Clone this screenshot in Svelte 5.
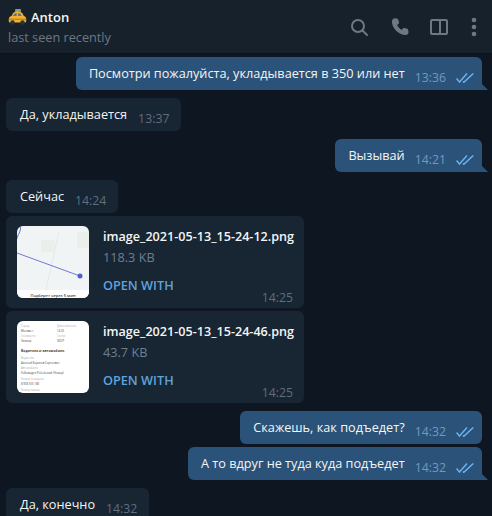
<script>
    const rows = [
        { id: 1, out: true, text: "Посмотри пожалуйста, укладывается в 350 или нет", time: "13:36", tail: true, gap: 0 },
        { id: 2, out: false, text: "Да, укладывается", time: "13:37", gap: 8 },
        { id: 3, out: true, text: "Вызывай", time: "14:21", tail: true, gap: 8 },
        { id: 4, out: false, text: "Сейчас", time: "14:24", gap: 8 },
        { id: 5, file: "image_2021-05-13_15-24-12.png", size: "118.3 KB", kind: "map", time: "14:25", gap: 3 },
        { id: 6, file: "image_2021-05-13_15-24-46.png", size: "43.7 KB", kind: "doc", time: "14:25", gap: 3 },
        { id: 7, out: true, text: "Скажешь, как подъедет?", time: "14:32", gap: 8 },
        { id: 8, out: true, text: "А то вдруг не туда куда подъедет", time: "14:32", tail: true, gap: 3 },
        { id: 9, out: false, text: "Да, конечно", time: "14:32", gap: 8 },
    ];
</script>

{#snippet ticks()}
    <svg class="ticks" width="18" height="10" viewBox="0 0 18 10" fill="none" stroke="#6ab2f2" stroke-width="1.500">
        <path d="M0.500 5.500l3 3.500 7.500-8.500" />
        <path d="M7 8.500l.8.800 9.500-8.800" />
    </svg>
{/snippet}

<div class="window">
    <header class="topbar">
        <div class="peer">
            <div class="name">
                <svg class="taxi" width="19" height="16" viewBox="0 0 19 16">
                    <rect x="7" y="0" width="6" height="3" rx="1" fill="#8d9a78" />
                    <path d="M4 6.500C5 3.500 6 2.500 9.500 2.500s5 1 6 4l2 1.500c1 .8 1 5.500 0 5.500H1.500c-1 0-1-4.700 0-5.500z" fill="#f0b030" />
                    <path d="M5 7c.6-2 1.500-3 3.700-3v3zM10 4c2 0 3 1 3.700 3H10z" fill="#607686" />
                    <rect x="1" y="9.500" width="17" height="1.500" fill="#c98a1c" />
                    <circle cx="4.500" cy="13.500" r="2.200" fill="#2d3138" />
                    <circle cx="14.500" cy="13.500" r="2.200" fill="#2d3138" />
                </svg>
                <span>Anton</span>
            </div>
            <div class="status">last seen recently</div>
        </div>
        <div class="actions">
            <svg width="20" height="20" viewBox="0 0 20 20" fill="none" stroke="#6d7883" stroke-width="2">
                <circle cx="9" cy="9" r="6" />
                <path d="M13.500 13.500L18 18" stroke-linecap="round" />
            </svg>
            <svg class="phone" width="20" height="20" viewBox="0 0 24 24" fill="#6d7883">
                <path d="M6.600 1.500l3 .8 1.500 5-2.500 2.200c1 2.400 3 4.500 5.600 5.800l2.300-2.400 5 1.500.7 3.300c.2 1.500-.6 3.600-2.800 3.900C10.500 22 1.700 12.500 2.300 5c.2-2.200 2.500-3.800 4.300-3.500z" />
            </svg>
            <svg width="20" height="20" viewBox="0 0 20 20" fill="none" stroke="#6d7883" stroke-width="2">
                <rect x="2" y="3" width="16" height="14" rx="1" />
                <path d="M11 3v14" />
            </svg>
            <svg width="10" height="20" viewBox="0 0 10 20" fill="#6d7883">
                <circle cx="5" cy="3" r="2.300" />
                <circle cx="5" cy="10" r="2.300" />
                <circle cx="5" cy="17" r="2.300" />
            </svg>
        </div>
    </header>

    <main class="history">
        {#each rows as row (row.id)}
            <div class="row" class:mine={row.out} style="margin-top: {row.gap}px">
                {#if row.file}
                    <div class="bubble file">
                        <div class="thumb">
                            {#if row.kind === "map"}
                                <svg width="72" height="72" viewBox="0 0 72 72">
                                    <rect width="72" height="72" fill="#f1f4f4" />
                                    <path d="M28 68L42 6" stroke="#e5e8e6" stroke-width="1" fill="none" />
                                    <path d="M24 14h14v12H24zM60 6h12v16H60z" fill="#ebefeb" />
                                    <path d="M0 27L63 50" stroke="#6f79d8" stroke-width="1" fill="none" />
                                    <path d="M3 0C5 5 0 9 0 13" stroke="#5b6bd0" stroke-width="1" fill="none" />
                                    <circle cx="63" cy="50" r="2.500" fill="#4f5fd0" />
                                    <rect y="64" width="72" height="8" fill="#fff" />
                                    <text x="36" y="70.500" class="tiny-map">Подберет через 5 мин</text>
                                </svg>
                            {:else}
                                <svg width="72" height="72" viewBox="0 0 72 72">
                                    <rect width="72" height="72" fill="#fff" />
                                    <g class="tiny-doc">
                                        <text x="4" y="6" class="label">Город</text>
                                        <text x="40" y="6" class="label">Длительность</text>
                                        <text x="4" y="10.500">Москва г.</text>
                                        <text x="40" y="10.500">14:25</text>
                                        <text x="4" y="16" class="label">Стоимость</text>
                                        <text x="40" y="16" class="label">Статус</text>
                                        <text x="4" y="20.500">Экипаж</text>
                                        <text x="40" y="20.500">300 Р</text>
                                        <text x="4" y="31" class="heading">Водитель и автомобиль</text>
                                        <text x="4" y="38" class="label">Водитель</text>
                                        <text x="4" y="42.500">Алексей Борисов Сергеевич</text>
                                        <text x="4" y="48" class="label">Автомобиль</text>
                                        <text x="4" y="53">Volkswagen Polo белый (Номер)</text>
                                        <text x="4" y="59" class="label">Номер телефона</text>
                                        <text x="4" y="63.500">8 903 555 180</text>
                                        <text x="4" y="70" class="label">Номер заказа</text>
                                    </g>
                                </svg>
                            {/if}
                        </div>
                        <div class="meta">
                            <div class="filename">{row.file}</div>
                            <div class="size">{row.size}</div>
                            <div class="open">OPEN WITH</div>
                        </div>
                        <span class="time corner">{row.time}</span>
                    </div>
                {:else}
                    <div class="bubble" class:tail={row.tail}>
                        <span class="text">{row.text}</span>
                        <span class="time">{row.time}</span>
                        {#if row.out}
                            {@render ticks()}
                        {/if}
                    </div>
                {/if}
            </div>
        {/each}
    </main>
</div>

<style>
    :global(body) {
        margin: 0;
        background: #0e1621;
    }

    .window {
        width: 492px;
        height: 516px;
        overflow: hidden;
        display: flex;
        flex-direction: column;
        font-family: "Open Sans", "Noto Sans", sans-serif;
        font-size: 12.700px;
        color: #f5f5f5;
        background: #0e1621;
    }

    .topbar {
        flex: none;
        height: 54px;
        box-sizing: border-box;
        display: flex;
        align-items: center;
        justify-content: space-between;
        padding: 0 13px 0 8px;
        background: #17212b;
        border-bottom: 1px solid #0b121a;
    }

    .name {
        display: flex;
        align-items: center;
        gap: 4px;
        font-weight: 600;
        font-size: 13px;
        color: #f5f5f5;
    }

    .status {
        margin-top: 2px;
        color: #6d7883;
    }

    .actions {
        display: flex;
        align-items: center;
        gap: 20px;
    }

    .phone {
        transform: translateX(1px);
    }

    .history {
        flex: 1;
        padding-top: 3px;
        display: flex;
        flex-direction: column;
    }

    .row {
        display: flex;
        padding: 0 10px 0 6px;
    }

    .row.mine {
        justify-content: flex-end;
    }

    .bubble {
        flex: none;
        position: relative;
        display: flex;
        align-items: flex-start;
        height: 33px;
        box-sizing: border-box;
        padding: 7px 12px 0 14px;
        background: #182533;
        border-radius: 6px;
    }

    .row.mine .bubble {
        background: #2b5278;
        padding-left: 13px;
        padding-right: 8px;
    }

    .bubble.tail {
        border-bottom-right-radius: 0;
    }

    .bubble.tail::after {
        content: "";
        position: absolute;
        right: -6px;
        bottom: 0;
        width: 6px;
        height: 6px;
        background: #2b5278;
        clip-path: polygon(0 0, 100% 100%, 0 100%);
    }

    .text {
        white-space: nowrap;
    }

    .time {
        margin: 7px 0 0 11px;
        font-size: 12.300px;
        line-height: 14px;
        color: #5f6f7e;
    }

    .row.mine .time {
        color: #7399c0;
        margin-left: 10px;
    }

    .ticks {
        margin: 9px 0 0 10px;
    }

    .bubble.file {
        width: 298px;
        height: 92px;
        padding: 10px 0 0 11px;
        gap: 14px;
    }

    .thumb {
        width: 72px;
        height: 72px;
        border-radius: 6px;
        overflow: hidden;
    }

    .thumb svg {
        display: block;
    }

    .tiny-map {
        font-size: 4px;
        font-weight: 600;
        text-anchor: middle;
        fill: #444;
    }

    .tiny-doc text {
        font-size: 2.800px;
        fill: #444;
    }

    .tiny-doc text.label {
        fill: #aaa;
    }

    .tiny-doc text.heading {
        font-size: 3.400px;
        font-weight: 700;
    }

    .meta {
        padding-top: 2px;
    }

    .filename {
        font-size: 12.600px;
        font-weight: 600;
        line-height: 18px;
    }

    .size {
        margin-top: 2px;
        line-height: 18px;
        color: #6d7f8f;
    }

    .open {
        margin-top: 10px;
        font-weight: 600;
        line-height: 18px;
        color: #5fa3dd;
    }

    .time.corner {
        position: absolute;
        right: 11px;
        bottom: 3px;
        margin: 0;
    }
</style>
